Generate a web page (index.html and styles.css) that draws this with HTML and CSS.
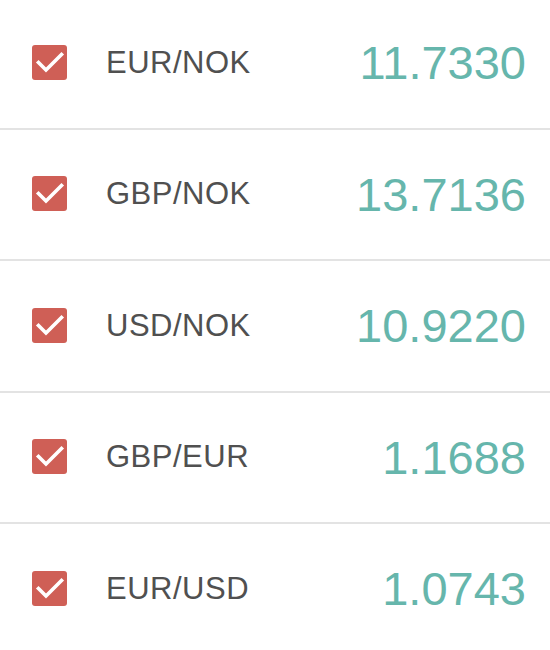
FILE: index.html
```html
<!DOCTYPE html>
<html>
<head>
<meta charset="utf-8">
<link rel="stylesheet" href="styles.css">
</head>
<body>
<ul class="list">
  <li class="row">
    <span class="check"><svg viewBox="0 0 35 35" width="35" height="35"><polyline points="6.5,17.5 14,25 29.5,9.5" /></svg></span>
    <span class="pair">EUR/NOK</span>
    <span class="rate">11.7330</span>
  </li>
  <li class="row">
    <span class="check"><svg viewBox="0 0 35 35" width="35" height="35"><polyline points="6.5,17.5 14,25 29.5,9.5" /></svg></span>
    <span class="pair">GBP/NOK</span>
    <span class="rate">13.7136</span>
  </li>
  <li class="row">
    <span class="check"><svg viewBox="0 0 35 35" width="35" height="35"><polyline points="6.5,17.5 14,25 29.5,9.5" /></svg></span>
    <span class="pair">USD/NOK</span>
    <span class="rate">10.9220</span>
  </li>
  <li class="row">
    <span class="check"><svg viewBox="0 0 35 35" width="35" height="35"><polyline points="6.5,17.5 14,25 29.5,9.5" /></svg></span>
    <span class="pair">GBP/EUR</span>
    <span class="rate">1.1688</span>
  </li>
  <li class="row">
    <span class="check"><svg viewBox="0 0 35 35" width="35" height="35"><polyline points="6.5,17.5 14,25 29.5,9.5" /></svg></span>
    <span class="pair">EUR/USD</span>
    <span class="rate">1.0743</span>
  </li>
</ul>
</body>
</html>
```
FILE: styles.css
```css
html, body {
  margin: 0;
  padding: 0;
  background: #ffffff;
}
body {
  font-family: "Liberation Sans", Arial, sans-serif;
}
.list {
  list-style: none;
  margin: -2px 0 0 0;
  padding: 0;
}
.row {
  display: flex;
  align-items: center;
  height: 129.5px;
  border-bottom: 2px solid #e3e3e3;
  padding: 0 24px 0 32px;
}
.row:last-child {
  border-bottom: none;
}
.check {
  width: 35px;
  height: 35px;
  border-radius: 3px;
  background: #cf5f56;
  display: flex;
  flex: none;
  margin-top: -1px;
}
.check svg {
  display: block;
}
.check polyline {
  fill: none;
  stroke: #ffffff;
  stroke-width: 3.6;
  stroke-linecap: square;
  stroke-linejoin: miter;
}
.pair {
  margin-left: 39px;
  font-size: 31px;
  letter-spacing: 0.5px;
  color: #505050;
  flex: 1;
}
.rate {
  font-size: 47px;
  color: #66b6ac;
}
```
